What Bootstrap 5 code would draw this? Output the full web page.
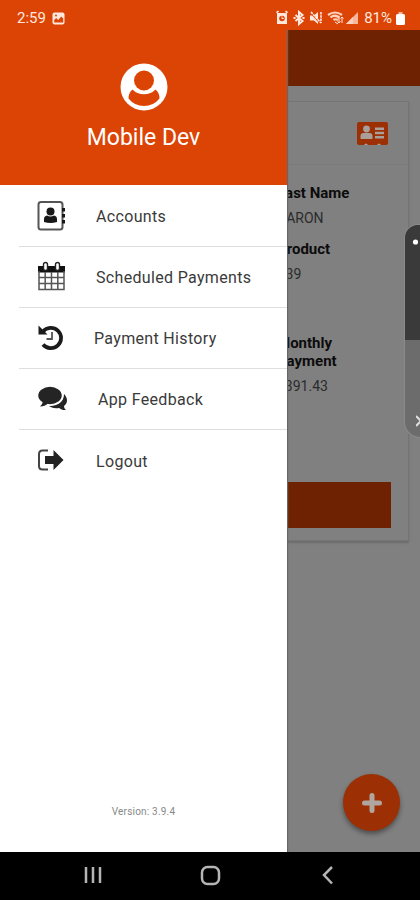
<!DOCTYPE html>
<html lang="en">
<head>
<meta charset="utf-8">
<meta name="viewport" content="width=device-width, initial-scale=1">
<title>Mobile Dev</title>
<link rel="stylesheet" href="https://cdn.jsdelivr.net/npm/bootstrap@5.3.0/dist/css/bootstrap.min.css">
<style>
body{font-family:Roboto,"Liberation Sans",sans-serif;background:#000;line-height:1.2}
svg{display:block;flex:none}
.screen{width:420px;height:900px}
.status{height:30px;background:#dc4405;color:#ffe9df;padding:9px 15px 0 17px;font-size:15px}
.status-text{line-height:18px}
.status-image{margin-left:2px}
.percent{margin-left:-1px}
.stage{height:822px;background:#808080}
.appbar{height:56px;background:#6e2202}
.account{width:397px;height:440px;margin:15px 0 0 12px;border:1px solid #757575;box-shadow:0 2px 2px #6c6c6c}
.account-top{height:63px;border-bottom:1px solid #797979;padding:20px 20px 0 0}
.facts{padding-left:264px;color:#2b2b2b;font-size:14px;height:317px}
.facts dt{font-size:15px;line-height:18px;font-weight:700;color:#0c0c0c;margin:0}
.facts dd{line-height:18px;margin:7px 0 13px}
.facts dt:first-child{margin-top:3px}
.facts .fact-gap{margin-bottom:51px}
.pay{height:46px;margin:0 17px;background:#6e2202}
.fab{right:20px;bottom:21px;width:57px;height:57px;background:#9c2f04;box-shadow:0 3px 5px #0006}
.drawer{left:0;top:0;width:287px;height:822px;background:#fff;box-shadow:1px 0 1px #666}
.profile{height:155px;background:#dc4405;color:#fff;padding-top:33px}
.profile-name{font-size:23px;line-height:28px;margin-top:13px;letter-spacing:0}
.menu-item{height:61px;margin-left:19px;border-bottom:1px solid #dedede;padding-left:17px;color:#3a3a3a;font-size:16px;letter-spacing:.33px}
.menu-item:last-child{border:0}
.menu-list{padding-top:1px}
.menu-label{padding-top:2px}
.menu-icon{width:32px;margin-right:28px;color:#222}
.icon-history{margin-right:26px}
.icon-chat{margin-right:30px}
.version{font-size:10px;color:#888;padding-bottom:34px;letter-spacing:.2px}
.edge-panel{left:404px;top:194px;width:16px;height:214px;border-radius:15px 0 0 17px;background:#6c6c6c;border:1px solid #8a8a8a;border-right:0}
.edge-top{height:115px;background:#3a3a3a;padding:14px 0 0 7px}
.edge-arrow{margin:75px 0 0 11px}
.sysnav{height:48px;background:#000}
</style>
<script src="https://cdn.jsdelivr.net/npm/bootstrap@5.3.0/dist/js/bootstrap.bundle.min.js"></script>
</head>
<body>
<div class="screen d-flex flex-column overflow-hidden">
  <header class="status d-flex justify-content-between align-items-start">
    <div class="d-flex align-items-center gap-1">
      <span class="status-text">2:59</span>
      <svg class="status-image" width="13" height="13" viewBox="0 0 13 13"><rect x=".5" y=".5" width="12" height="12" rx="2" fill="#ffe9df"/><path d="M2.2 10.5V8l2-2 2 2 3-3.500 2 2v4z" fill="#dc4405"/><circle cx="4" cy="3.600" r="1" fill="#dc4405"/></svg>
    </div>
    <div class="d-flex align-items-center">
      <svg width="90" height="16" viewBox="277 11 90 16" fill="#ffe9df">
        <path d="M279 14h10v11h-10zM278 13l2-1.500 1 1-2 2zM290 13l-2-1.500-1 1 2 2z"/><circle cx="284" cy="19.500" r="2.800" fill="#dc4405"/><path d="M284 17.500v2h1.800" stroke="#ffe9df" fill="none"/>
        <path d="M297.500 16l7 6-3.500 3V13l3.500 3-7 6M295.500 19h2M304.500 19h2" stroke="#ffe9df" stroke-width="2" fill="none"/>
        <path d="M312 16.500h4l4-3.500v12l-4-3.500h-4z"/><path d="M312 13l11 12" stroke="#dc4405" stroke-width="1.500"/><path d="M313 13l10 11M323 13v11" stroke="#ffe9df" stroke-width="1.600" stroke-dasharray="2.500 .8"/>
        <path d="M330 16q7-5 14 0M332.500 18.500q4-3.500 9 0M335.500 21q2-1.500 4.500 0" stroke="#ffd0bc" stroke-width="2.200" fill="none"/><path d="M337 23l3 2M341 18v6m-1.500-1.500L341 24l1.500-1.500M344 24v-6m-1.500 1.500L344 18l1.500 1.500" stroke="#ffe9df" stroke-width="1" fill="none"/>
        <path d="M348 25l12-12v12z" fill="#f8b69b"/><path d="M348 25l7-7v7z" fill="#fcd0be"/>
      </svg>
      <span class="status-text percent">81%</span>
      <svg class="ms-1" width="9" height="13" viewBox="0 0 9 13" fill="#fff"><path d="M2.500 0h4v2h-4z" fill="#f8b69b"/><rect y="2" width="9" height="11" rx="1.500"/></svg>
    </div>
  </header>

  <main class="stage position-relative overflow-hidden">
    <div class="appbar"></div>
    <section class="account d-flex flex-column">
      <div class="account-top d-flex justify-content-end">
        <svg width="31" height="24" viewBox="0 0 31 24"><rect width="31" height="23" rx="2" fill="#9c2f04"/><g fill="#a9a09c"><circle cx="9.500" cy="7" r="3.400"/><path d="M3.500 17v-3q0-3 3-3h6q3 0 3 3v3zM18 5.500h9v2.500h-9zM18 9.700h9v2.500h-9zM18 14h9v2.500h-9z"/><path d="M7 23q2-3 4 0zM20 23q2-3 4 0z"/></g></svg>
      </div>
      <dl class="facts mb-0 pt-3">
        <dt>Last Name</dt><dd>AARON</dd>
        <dt>Product</dt><dd class="fact-gap">#39</dd>
        <dt>Monthly<br>Payment</dt><dd>$391.43</dd>
      </dl>
      <div class="pay"></div>
    </section>

    <div class="fab position-absolute rounded-circle d-flex align-items-center justify-content-center">
      <svg width="20" height="20" viewBox="0 0 20 20" stroke="#b1a5a0" stroke-width="5" stroke-linecap="round"><path d="M10 2.500v15M2.500 10h15"/></svg>
    </div>

    <aside class="drawer position-absolute d-flex flex-column">
      <div class="profile d-flex flex-column align-items-center">
        <svg width="48" height="48" viewBox="0 0 48 48"><circle cx="24" cy="24" r="23.500" fill="#fff"/><g fill="#dc4405"><circle cx="24" cy="17.500" r="10"/><path d="M12.500 26.500q4.500 4.800 11.500 4.800t11.500-4.800q4 3 4 9-6 7.500-15.500 7.500T8.500 35.500q0-6 4-9z"/></g></svg>
        <div class="profile-name">Mobile Dev</div>
      </div>
      <nav class="menu-list">
        <div class="menu-item d-flex align-items-center">
          <span class="menu-icon"><svg width="32" height="32" viewBox="0 0 32 32"><rect x="2.500" y="2" width="24" height="27.500" rx="2.500" fill="none" stroke="#555" stroke-width="2"/><g fill="#181818"><circle cx="14.500" cy="11.500" r="4"/><path d="M8 22v-3q0-3 3-3.500 3.500 2 7 0 3 .5 3 3.500v3q-6.500 2-13 0zM26 8h3v3.500h-3zM26 14h3v3.500h-3zM26 20h3v3.500h-3z"/></g></svg></span>
          <span class="menu-label">Accounts</span>
        </div>
        <div class="menu-item d-flex align-items-center">
          <span class="menu-icon"><svg width="32" height="32" viewBox="0 0 32 32"><path d="M2 5h27v6.500H2z" fill="#111"/><path d="M3 10v18.500h25V10M3 16.500h25M3 22.500h25M9.200 11v17M15.500 11v17M21.800 11v17" fill="none" stroke="#555" stroke-width="1.500"/><rect x="7.500" y="1.500" width="4" height="8" rx="2" fill="#fff" stroke="#222" stroke-width="1.400"/><rect x="19.500" y="1.500" width="4" height="8" rx="2" fill="#fff" stroke="#222" stroke-width="1.400"/></svg></span>
          <span class="menu-label">Scheduled Payments</span>
        </div>
        <div class="menu-item d-flex align-items-center">
          <span class="menu-icon icon-history"><svg width="32" height="32" viewBox="0 0 32 32"><path d="M7 9.500A10.200 10.200 0 1 1 7 22.500" fill="none" stroke="#1b1b1b" stroke-width="3.700"/><path d="M2.500 3.500l9 9H2.500z" fill="#1b1b1b"/><path d="M16 10v7h-5.500" fill="none" stroke="#555" stroke-width="1.800"/></svg></span>
          <span class="menu-label">Payment History</span>
        </div>
        <div class="menu-item d-flex align-items-center">
          <span class="menu-icon icon-chat"><svg width="32" height="32" viewBox="0 0 32 32" fill="#242424"><path d="M28 11c4 4 4 9 0 12 0 2 1 3 2 4-3 .3-5-.5-7-2-5 .8-8-.5-10-2 9 0 15-4 15-12z"/><ellipse cx="14" cy="12.500" rx="12.500" ry="9.500" stroke="#fff" stroke-width="1.500"/><path d="M7 17.500q0 3-3 6 5 0 8-3z"/></svg></span>
          <span class="menu-label">App Feedback</span>
        </div>
        <div class="menu-item d-flex align-items-center">
          <span class="menu-icon"><svg width="32" height="32" viewBox="0 0 32 32"><path d="M12 5.500H6.500Q3 5.500 3 9v12q0 3.500 3.500 3.500H12" fill="none" stroke="#444" stroke-width="2"/><path d="M9 11h8.500V5l10 10-10 10v-6H9z" fill="#222"/></svg></span>
          <span class="menu-label">Logout</span>
        </div>
      </nav>
      <div class="version text-center mt-auto">Version: 3.9.4</div>
    </aside>

    <div class="edge-panel position-absolute overflow-hidden">
      <div class="edge-top"><svg width="7" height="7"><circle cx="3.500" cy="3" r="2.600" fill="#fff"/></svg></div>
      <svg class="edge-arrow" width="10" height="12" viewBox="0 0 10 12"><path d="M0 1l5 5-5 5" fill="none" stroke="#ddd" stroke-width="2"/></svg>
    </div>
  </main>

  <footer class="sysnav">
    <svg width="420" height="48" viewBox="0 852 420 48" fill="none" stroke="#b5b5b5" stroke-width="2.500"><path d="M86 867v16M93 867v16M100 867v16"/><rect x="202" y="867" width="17" height="17" rx="5.500"/><path d="M332 867l-8 8 8 8.500"/></svg>
  </footer>
</div>
</body>
</html>
